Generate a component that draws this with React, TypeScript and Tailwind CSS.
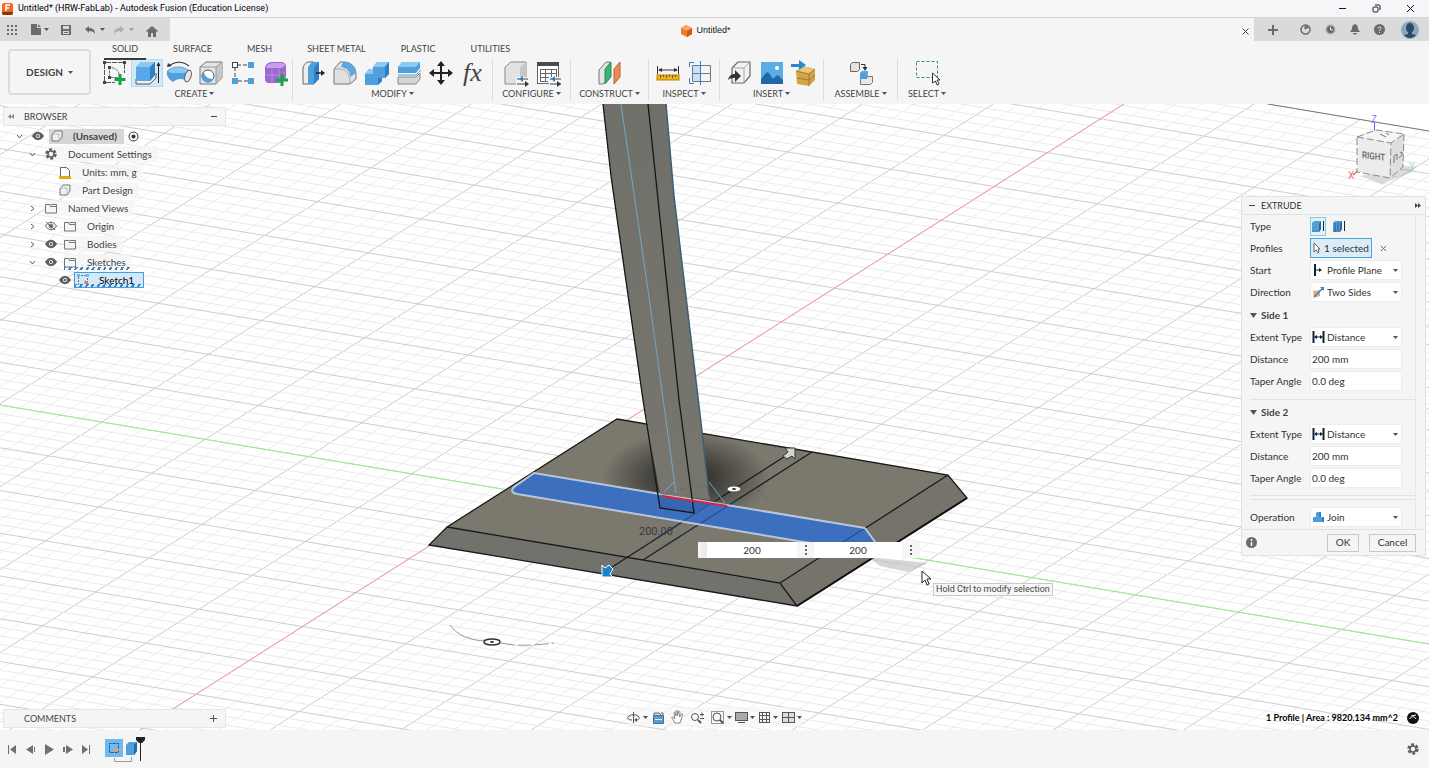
import { useState } from "react";
import type { ReactNode } from "react";

function Caret({ className = "text-gray-600" }: { className?: string }) {
  return (
    <svg width="5" height="3" viewBox="0 0 5 3" className={`shrink-0 ${className}`}>
      <path d="M0 0h5L2.5 3z" fill="currentColor" />
    </svg>
  );
}

function Icon({ size = 28, children }: { size?: number; children: ReactNode }) {
  return (
    <svg width={size} height={size} viewBox="0 0 28 28" fill="none" className="shrink-0">
      {children}
    </svg>
  );
}

/* ---------- toolbar drawings, all on a 28 x 28 grid ---------- */

const createSketch = (
  <Icon>
    <path d="M5 3.500h17M3.500 5v17M23.500 5v9M5 23.500h9" stroke="#555" strokeDasharray="5 1" />
    <path d="M8.500 18.500v-10c6 0 10 3 10 10z" stroke="#666" strokeDasharray="3 1" />
    <path d="M2 2h3v3H2zM22 2h3v3h-3zM2 22h3v3H2zM7 7h3v3H7zM7 17h3v3H7z" fill="#444" />
    <path d="M19 15v11M13.500 20.500h11" stroke="#16a34a" strokeWidth="3" />
  </Icon>
);

const extrude = (
  <Icon>
    <path d="M3 20v5h14l6-6v-5" fill="#f0f0f0" stroke="#555" />
    <path d="M3 8l5-5h14v13l-5 6H3z" fill="#5aa9e6" />
    <path d="M3 8l5-5h14l-5 5z" fill="#8cc8f2" />
    <path d="M17 8l5-5v13l-5 6z" fill="#2f80c4" />
    <path d="M25.500 4v20" stroke="#222" />
    <path d="M23.500 7l2-4 2 4z" fill="#222" />
  </Icon>
);

const revolve = (
  <Icon>
    <path d="M4 7c6-5 14-5 20 0" stroke="#333" strokeWidth="1.200" />
    <path d="M2 8l1-4 4 3z" fill="#333" />
    <path d="M2 12c6-6 17-6 23 0l-2 11c-4-4-11-4-15 0-4-2-7-7-6-11z" fill="#4f9fdd" />
    <path d="M3 12c6-5 15-5 21 0-4 3-8 2-11 2s-7 1-10-2z" fill="#8cc8f2" />
    <ellipse cx="23" cy="17" rx="3" ry="6" fill="#e8e8e8" stroke="#555" transform="rotate(18 23 17)" />
  </Icon>
);

const hole = (
  <Icon>
    <path d="M3 8l6-5h16v16l-6 6H3z" fill="#e4e4e4" stroke="#777" />
    <path d="M19 8l6-5v16l-6 6z" fill="#c6c6c6" />
    <path d="M3 8h16v17M19 8l6-5" stroke="#999" />
    <circle cx="11" cy="17" r="6" fill="#fff" stroke="#555" />
    <path d="M7 12.500a6 6 0 1 0 9 7.500c-5 0-9-3-9-7.500z" fill="#4f9fdd" />
  </Icon>
);

const pattern = (
  <Icon>
    <path d="M8 6h11M6 8v11M9 22h10" stroke="#444" strokeDasharray="4 2" />
    <rect x="3.500" y="3.500" width="5" height="5" fill="#fff" stroke="#444" />
    <rect x="19" y="3" width="6" height="6" fill="#4f9fdd" />
    <rect x="3" y="19" width="6" height="6" fill="#4f9fdd" />
    <rect x="19" y="19" width="6" height="6" fill="#4f9fdd" />
  </Icon>
);

const form = (
  <Icon>
    <path d="M4 9c0-3 3-6 7-6h9c3 0 5 2 5 4v10c0 4-3 7-7 7H8c-3 0-4-2-4-4z" fill="#9d68cf" />
    <path d="M5 8c2-3 4-4 7-4h8c2 0 4 1 4 2-2 3-4 3-7 3H8c-1 0-3 0-3-1z" fill="#c9a0ec" />
    <path d="M11 10v13M5 16h13c3 0 5-1 6-3M18 10v13" stroke="#b98be0" />
    <path d="M21 15v12M15 21h12" stroke="#16a34a" strokeWidth="3" />
  </Icon>
);

const pressPull = (
  <Icon>
    <path d="M4 25V9c1-4 3-6 6-6h5v22z" fill="#ececec" stroke="#666" />
    <path d="M9 25V8l4-5h7v17l-5 5z" fill="#4f9fdd" />
    <path d="M15 8l5-5v17l-5 5z" fill="#2f80c4" />
    <path d="M17 14h7" stroke="#222" strokeWidth="1.500" />
    <path d="M22 11l4 3-4 3z" fill="#222" />
  </Icon>
);

const fillet = (
  <Icon>
    <path d="M3 25V10l6-7h4c7 0 12 5 12 12v5l-6 5z" fill="#e0e0e0" stroke="#777" />
    <path d="M12 3h1c7 0 12 5 12 11l-6 4c0-6-3-9-9-10z" fill="#5aa9e6" />
    <path d="M3 10h5c7 0 11 4 11 15" stroke="#aaa" />
  </Icon>
);

const combine = (
  <Icon>
    <path d="M10 8l4-5h12v12l-4 4h-3v3l-4 4H2V15l4-5h4z" fill="#4f9fdd" />
    <path d="M10 8l4-5h12l-4 5zM2 15l4-5h4v5z" fill="#8cc8f2" />
    <path d="M22 8l4-5v12l-4 4zM15 19h4v3l-4 4z" fill="#2f80c4" />
  </Icon>
);

const offsetFace = (
  <Icon>
    <path d="M3 18h18l4-4v6l-4 5H3z" fill="#d6d6d6" stroke="#888" />
    <path d="M3 8l4-5h18v6l-4 5H3z" fill="#4f9fdd" />
    <path d="M3 8l4-5h18l-4 5z" fill="#8cc8f2" />
    <path d="M3 16h18l5-5" stroke="#4f9fdd" />
  </Icon>
);

const move = (
  <Icon>
    <path d="M14 5v18M5 14h18" stroke="#222" strokeWidth="2" />
    <path d="M14 2l4 5h-8zM14 26l4-5h-8zM2 14l5-4v8zM26 14l-5-4v8z" fill="#222" />
  </Icon>
);

const configureBox = (
  <Icon>
    <path d="M3 25V8l6-5h15v15l-6 7z" fill="#e2e2e2" stroke="#888" />
    <path d="M18 8l6-5v15l-6 7z" fill="#c8c8c8" />
    <path d="M14 18h14v9H14z" fill="#f5f5f5" />
    <path d="M15 20h11M15 25h11" stroke="#444" />
    <path d="M21 17l-4 3 4 3z" fill="#2f80c4" />
    <path d="M23 22l4 3-4 3z" fill="#333" />
  </Icon>
);

const configureTable = (
  <Icon>
    <rect x="3.500" y="4.500" width="21" height="20" fill="#fff" stroke="#666" />
    <rect x="3" y="3" width="22" height="4" fill="#4a4a4a" />
    <path d="M6 10.500h16M6 14.500h16M6 18.500h12M6 22.500h8M6.500 10v13M11.500 10v13M17.500 10v9M22.500 10v8" stroke="#666" />
    <path d="M15 18h13v9H15z" fill="#f5f5f5" />
    <path d="M16 20h11M16 25h11" stroke="#444" />
    <path d="M21 17l-4 3 4 3z" fill="#2f80c4" />
    <path d="M23 22l4 3-4 3z" fill="#333" />
  </Icon>
);

const plane = (
  <Icon>
    <path d="M3 25V11l7-8h4v14l-7 8z" fill="#e5e5e5" stroke="#777" />
    <path d="M9 10l6-7v15l-6 7z" fill="#3bb273" stroke="#2b8a57" />
    <path d="M18 10l6-7v15l-6 7z" fill="#e8895a" stroke="#bd6236" />
  </Icon>
);

const measure = (
  <Icon>
    <path d="M3.500 7v8M24.500 7v8M5 11h18" stroke="#333" />
    <path d="M4 11l4-2v4zM24 11l-4-2v4z" fill="#333" />
    <rect x="3" y="16" width="22" height="5" fill="#f0b323" stroke="#b98300" />
    <path d="M6.500 16v3M9.500 16v2M12.500 16v3M15.500 16v2M18.500 16v3M21.500 16v2" stroke="#7d5800" />
  </Icon>
);

const inspectGrid = (
  <Icon>
    <rect x="6" y="6" width="8" height="17" fill="#c7e3f8" />
    <path d="M6.500 6.500h18v16h-18zM6 14.500h18" stroke="#778" />
    <path d="M8 3.500H3.500V8M3.500 19v5.500H8M14.500 2v24" stroke="#2f80c4" />
  </Icon>
);

const insertDerive = (
  <Icon>
    <path d="M6 9l6-6h12v14l-6 7H6z" fill="#f2f2f2" stroke="#666" strokeWidth="1.200" />
    <path d="M6 9h12v15M18 9l6-6" stroke="#aaa" />
    <path d="M2 21c1-4 3-6 7-6v-4l6 6-6 6v-4c-3 0-5 0-7 2z" fill="#333" />
  </Icon>
);

const picture = (
  <Icon>
    <rect x="3" y="3" width="22" height="22" fill="#5aaee8" />
    <circle cx="19" cy="9" r="2" fill="#fff" />
    <path d="M3 20l5-6c1-1 2-1 3 0l4 6 3-3c1-1 2-1 3 0l4 4v4H3z" fill="#2168a5" />
  </Icon>
);

const crate = (
  <Icon>
    <path d="M6 12l7-5 12 3v11l-6 6-12-2z" fill="#d2a548" />
    <path d="M6 12l7-5 12 3-6 5z" fill="#e8c878" />
    <path d="M6 12l13 3 6-5M19 15v12M7 19l12 2 6-5" stroke="#a37a28" />
    <path d="M1 5h8V1l7 5-7 5V8H1z" fill="#2b87d3" />
  </Icon>
);

const joint = (
  <Icon>
    <path d="M3.500 5.500l2-2h7v7l-2 2h-7z" fill="#e3e3e3" stroke="#666" />
    <path d="M14 5.500h4v3" stroke="#333" />
    <path d="M15.500 8h5L18 12z" fill="#333" />
    <path d="M13 14l2-2h6v9h-8z" fill="#5aa9e6" />
    <path d="M13.500 25.500v-6h6l1-2h5v6l-2 2z" fill="#e8e8e8" stroke="#777" />
    <path d="M13 14h6v6h-6z" fill="#4f9fdd" />
  </Icon>
);

const selectBox = (
  <Icon>
    <rect x="3.500" y="2.500" width="21" height="16" stroke="#2f9e5a" strokeDasharray="3 2" />
    <path d="M19.500 14v10l3-2 1.500 4 2-1-2-4h3z" fill="#fff" stroke="#333" />
  </Icon>
);

const groups = [
  { name: "CREATE", width: "w-[196px]", active: 1, icons: [createSketch, extrude, revolve, hole, pattern, form] },
  { name: "MODIFY", width: "w-[200px]", icons: [pressPull, fillet, combine, offsetFace, move, "fx"] },
  { name: "CONFIGURE", width: "w-[78px]", icons: [configureBox, configureTable] },
  { name: "CONSTRUCT", width: "w-[78px]", icons: [plane] },
  { name: "INSPECT", width: "w-[71px]", icons: [measure, inspectGrid] },
  { name: "INSERT", width: "w-[104px]", icons: [insertDerive, picture, crate] },
  { name: "ASSEMBLE", width: "w-[74px]", icons: [joint] },
  { name: "SELECT", width: "w-[58px]", icons: [selectBox] },
];

const ribbonTabs = ["SOLID", "SURFACE", "MESH", "SHEET METAL", "PLASTIC", "UTILITIES"];

function TitleBar() {
  return (
    <header className="flex h-[18px] items-center justify-between border-b border-[#d4d4d6] bg-[#f6f6f9] pl-[2px] pr-[14px]">
      <div className="flex items-center gap-[5px]">
        <svg width="11" height="12" viewBox="0 0 11 12">
          <rect width="11" height="12" rx="2" fill="#f26a1b" />
          <path d="M0 9h11v1a2 2 0 0 1-2 2H2a2 2 0 0 1-2-2z" fill="#8e3708" />
          <path d="M4 8V2h4M4 5h3" stroke="#fff" strokeWidth="1.500" fill="none" />
        </svg>
        <span className="font-[Roboto,sans-serif] text-[9px] text-black">
          Untitled* (HRW-FabLab) - Autodesk Fusion (Education License)
        </span>
      </div>
      <div className="flex items-center gap-[25px] text-gray-900">
        <button aria-label="Minimize">
          <svg width="9" height="9" viewBox="0 0 9 9"><path d="M1 4.500h7" stroke="currentColor" /></svg>
        </button>
        <button aria-label="Restore">
          <svg width="9" height="9" viewBox="0 0 9 9" fill="none" stroke="currentColor">
            <rect x="1" y="3" width="5" height="5" rx="1" />
            <path d="M3 1h4a1 1 0 0 1 1 1v4" />
          </svg>
        </button>
        <button aria-label="Close">
          <svg width="9" height="9" viewBox="0 0 9 9"><path d="M1 1l7 7M8 1L1 8" stroke="currentColor" /></svg>
        </button>
      </div>
    </header>
  );
}

function TabBar() {
  return (
    <div className="flex h-[23px] bg-[#dadada] text-[#6b6b6b]">
      <div className="flex w-[170px] shrink-0 items-center pl-[7px]">
        <button aria-label="Data panel" className="mr-[14px]">
          <svg width="10" height="10" viewBox="0 0 10 10" fill="currentColor">
            <path d="M0 0h2v2H0zM4 0h2v2H4zM8 0h2v2H8zM0 4h2v2H0zM4 4h2v2H4zM8 4h2v2H8zM0 8h2v2H0zM4 8h2v2H4zM8 8h2v2H8z" />
          </svg>
        </button>
        <button aria-label="File" className="mr-[12px] flex items-center gap-[3px]">
          <svg width="10" height="11" viewBox="0 0 10 11" fill="currentColor"><path d="M0 0h6v4h4v7H0zM7 0l3 3H7z" /></svg>
          <Caret />
        </button>
        <button aria-label="Save" className="mr-[14px]">
          <svg width="10" height="10" viewBox="0 0 10 10">
            <path d="M0 0h10v10H0z" fill="currentColor" />
            <path d="M2 1h6v3H2zM2 6h6v3H2z" fill="#dadada" />
            <path d="M3 7.500h4" stroke="#6b6b6b" />
          </svg>
        </button>
        <button aria-label="Undo" className="mr-[9px] flex items-center gap-[5px]">
          <svg width="10" height="8" viewBox="0 0 10 8"><path d="M0 3l4-3v2c4 0 6 2 6 6-1-2-3-3-6-3v2z" fill="currentColor" /></svg>
          <Caret />
        </button>
        <button aria-label="Redo" className="mr-[12px] flex items-center gap-[5px] text-[#adadad]">
          <svg width="10" height="8" viewBox="0 0 10 8"><path d="M10 3L6 0v2C2 2 0 4 0 8c1-2 3-3 6-3v2z" fill="currentColor" /></svg>
          <Caret className="text-[#999]" />
        </button>
        <button aria-label="Home" className="pt-1">
          <svg width="12" height="11" viewBox="0 0 12 11" fill="currentColor"><path d="M6 0l6 5-1 1-1-1v6H7V7H5v4H2V5L1 6 0 5z" /></svg>
        </button>
      </div>
      <div className="flex flex-1 items-center bg-[#f5f5f5] pt-[3px]">
        <div className="flex flex-1 items-center justify-center gap-1">
          <svg width="11" height="12" viewBox="0 0 11 12">
            <path d="M5 0l6 3v6l-5 3-6-3V3z" fill="#f07a2a" />
            <path d="M5 0l6 3-5 3-6-3z" fill="#f9a76a" />
            <path d="M6 6l5-3v6l-5 3z" fill="#d9570c" />
          </svg>
          <span className="font-['Liberation_Sans',sans-serif] text-[9px] text-gray-900">Untitled*</span>
        </div>
        <button aria-label="Close tab" className="mr-[5px] text-gray-700">
          <svg width="7" height="7" viewBox="0 0 7 7"><path d="M0.500 0.500l6 6M6.500 0.500l-6 6" stroke="currentColor" /></svg>
        </button>
      </div>
      <div className="flex w-[175px] shrink-0 items-center pl-[14px]">
        <button aria-label="New tab" className="mr-[22px]">
          <svg width="10" height="10" viewBox="0 0 10 10"><path d="M5 0v10M0 5h10" stroke="currentColor" strokeWidth="2" /></svg>
        </button>
        <button aria-label="Extensions" className="mr-[14px]">
          <svg width="11" height="11" viewBox="0 0 11 11" fill="none" stroke="currentColor">
            <circle cx="5.500" cy="5.500" r="4.500" strokeWidth="1.500" />
            <path d="M5.500 2v2l3-1" strokeWidth="2" />
          </svg>
        </button>
        <button aria-label="Job status" className="mr-[14px]">
          <svg width="11" height="11" viewBox="0 0 11 11" fill="none">
            <circle cx="5.500" cy="5.500" r="5" fill="#a8a8a8" />
            <circle cx="5.500" cy="5.500" r="3.500" fill="#666" />
            <path d="M5.500 3v3H8" stroke="#eee" />
          </svg>
        </button>
        <button aria-label="Notifications" className="mr-[14px]">
          <svg width="10" height="11" viewBox="0 0 10 11" fill="currentColor"><path d="M5 0c3 1 3 3 3 5l2 3H0l2-3c0-2 0-4 3-5zM3 9h4c0 2-4 2-4 0z" /></svg>
        </button>
        <button aria-label="Help" className="mr-[16px]">
          <svg width="11" height="11" viewBox="0 0 11 11" fill="none">
            <circle cx="5.500" cy="5.500" r="5.500" fill="currentColor" />
            <path d="M4 4.500c0-2 3-2 3 0 0 1-1.500 1-1.500 2.500M5.500 8v1" stroke="#eee" />
          </svg>
        </button>
        <button aria-label="Account">
          <svg width="18" height="18" viewBox="0 0 18 18">
            <circle cx="9" cy="9" r="9" fill="#8ba6bf" />
            <ellipse cx="9" cy="7" rx="4" ry="5" fill="#2f4a63" />
            <path d="M7 10h4v3l4 1c-3 4-9 4-12 0l4-1z" fill="#2f4a63" />
          </svg>
        </button>
      </div>
    </div>
  );
}

function Ribbon() {
  const [tab, setTab] = useState("SOLID");

  return (
    <div className="flex h-[63px] bg-[#f5f5f5] text-[#444]">
      <button className="ml-[8px] mt-[8px] flex h-[46px] w-[83px] shrink-0 items-center justify-center gap-[5px] rounded-sm border-2 border-[#dcdcdc] text-[10px] font-bold">
        DESIGN <Caret />
      </button>
      <div className="ml-[6px] flex flex-1 flex-col">
        <nav className="flex h-[18px] gap-[35px] pl-[15px]">
          {ribbonTabs.map((name) => (
            <button
              key={name}
              onClick={() => setTab(name)}
              className="relative flex h-[16px] items-center text-[9px]"
            >
              {name}
              {tab === name && <span className="absolute -left-2 -right-2 top-[17px] h-[2px] bg-[#3c3c3c]" />}
            </button>
          ))}
        </nav>
        <div className="flex">
          {groups.map((group) => (
            <section
              key={group.name}
              className={`${group.width} flex h-[41px] shrink-0 flex-col items-center border-r border-[#dcdcdc] last:border-r-0`}
            >
              <div className="flex h-[28px]">
                {group.icons.map((icon, i) => (
                  <button
                    key={i}
                    className={`flex h-[28px] w-[32px] items-center justify-center ${
                      group.active === i ? "bg-[#d3e9f8] outline outline-[#b3d9f2] -outline-offset-1" : ""
                    }`}
                  >
                    {icon === "fx" ? (
                      <span className="font-['Liberation_Serif',serif] text-[26px] italic leading-none">fx</span>
                    ) : (
                      icon
                    )}
                  </button>
                ))}
              </div>
              <button className="flex h-[13px] items-center gap-[2px] text-[9px]">
                {group.name} <Caret />
              </button>
            </section>
          ))}
        </div>
      </div>
    </div>
  );
}

/* ---------- canvas ---------- */

// the ground grid is almost parallel-projected, so both line families keep one slope
const CELL_X = 26.1;
const CELL_Y = 8.55;

function range(from: number, to: number) {
  return Array.from({ length: to - from + 1 }, (_, i) => from + i);
}

function Scene() {
  return (
    <svg
      className="absolute inset-0 h-full w-full"
      viewBox="0 104 1429 626"
      preserveAspectRatio="xMidYMid slice"
      fill="none"
    >
      <defs>
        <clipPath id="ground">
          <path d="M0 104H1268L1429 131V730H0z" />
        </clipPath>
        <radialGradient id="contact" cx="686" cy="478" r="84" gradientUnits="userSpaceOnUse" gradientTransform="matrix(1 0 0 .55 0 215)">
          <stop offset="0" stopColor="#1c1c1a" stopOpacity="0.950" />
          <stop offset="0.500" stopColor="#1c1c1a" stopOpacity="0.500" />
          <stop offset="1" stopColor="#1c1c1a" stopOpacity="0" />
        </radialGradient>
        <linearGradient id="pole" x1="0" y1="0" x2="0" y2="1">
          <stop offset="0" stopColor="#70706a" />
          <stop offset="1" stopColor="#77766e" />
        </linearGradient>
      </defs>

      <g clipPath="url(#ground)">
        {range(-50, 65).map((k) => {
          const x = 1123.7 + k * CELL_X;
          return (
            <path key={k} d={`M${x} 104L${x - 984} 730`} stroke={k % 5 === 0 ? "#cdcdcd" : "#eeeeee"} />
          );
        })}
        {range(-60, 42).map((k) => {
          const y = 405 + k * CELL_Y;
          return (
            <path key={k} d={`M0 ${y}L1429 ${y + 239}`} stroke={k % 5 === 0 ? "#cdcdcd" : "#eaeaea"} />
          );
        })}
      </g>
      <path d="M1268 104L1429 131" stroke="#777" />
      <path d="M1124 104L140 730" stroke="#f79a9a" />
      <path d="M0 405L1429 644" stroke="#93f093" />

      {/* base plate */}
      <path d="M617 419L948 475L967 498L797 606L429 545L447 527z" fill="#7b786d" />
      <path d="M447 527L780 583L797 606L429 545z" fill="#72726c" />
      <path d="M948 475L967 498L797 606L780 583z" fill="#77736a" />
      <path d="M617 419L948 475L780 583L447 527z" fill="url(#contact)" />
      <path
        d="M617 419L948 475L967 498L797 606L429 545L447 527zM447 527L780 583L797 606M780 583L948 475"
        stroke="#1a1a1a"
        strokeWidth="1.300"
      />
      <path d="M967 498L797 606" stroke="#111" strokeWidth="2" />
      <path d="M787 455L609 569M812 452L643 560" stroke="#1a1a1a" strokeWidth="1.200" />

      {/* selected profile */}
      <path d="M534 473L865 528L878 546H828L517 494Q509 492 514 487z" fill="#3c6fbd" />
      <path d="M865 528L835 547M718 499L655 539M739 499L682 535" stroke="#1f3f7c" />
      <path d="M865 528L878 546M828 546L517 494Q509 492 514 487L534 473L865 528" stroke="#b9c6da" strokeWidth="2" />

      {/* pole */}
      <path d="M603 104H666L674 196L702 431L710 500L660 494L643 400L611 176z" fill="url(#pole)" />
      <path d="M658 496L710 503L695 514L660 508z" fill="#3566b2" />
      <path d="M603 104L611 176L643 400L660 508L694 513L679 400L648 104" stroke="#161616" strokeWidth="1.300" />
      <path d="M666 104L674 196L702 431L709 496" stroke="#3c5f78" strokeWidth="1.500" />
      <path d="M621 104L650 304L676 493M675 481L664 492M709 482L725 503" stroke="#6fa9c4" />
      <path d="M662 496L727 506" stroke="#e0203c" strokeWidth="2" />

      {/* drag handles */}
      <path d="M750 487C760 491 768 496 768 503M680 489C695 485 710 486 726 488" stroke="#555" strokeDasharray="6 2" opacity="0.400" />
      <ellipse cx="734" cy="489" rx="7" ry="3" fill="#fff" stroke="#555" />
      <ellipse cx="734" cy="489" rx="2" ry="1" fill="#333" />
      <path d="M450 625C458 636 470 640 484 641" stroke="#999" />
      <path d="M501 643C515 646 530 646 554 643" stroke="#999" strokeDasharray="14 3" />
      <ellipse cx="492" cy="642" rx="8" ry="3" fill="#fff" stroke="#333" strokeWidth="1.500" />
      <ellipse cx="492" cy="642" rx="2" ry="1" fill="#333" />
      <path d="M785 448h10v11l-3-3-5 3-4-3 5-4z" fill="#d4d4d0" stroke="#333" />
      <path d="M602 565v12h11l-3-3 3-5-4-4-4 3z" fill="#1d82cc" stroke="#fff" />
      <path d="M868 557L928 563L908 572L880 566z" fill="#999" opacity="0.400" />
      <text x="639" y="535" fill="#3a3a38" fontSize="11" className="font-[Roboto,sans-serif]">200.00</text>
      <path d="M922 571v12l3-3 2 5 2-1-2-5h4z" fill="#fff" stroke="#222" />
    </svg>
  );
}

function Eye({ off = false }: { off?: boolean }) {
  return (
    <svg width="12" height="10" viewBox="0 0 12 10" fill="none" className="shrink-0">
      <path d="M0.500 5c3-5 8-5 11 0-3 5-8 5-11 0z" fill={off ? "none" : "#5f5f5f"} stroke="#5f5f5f" />
      <circle cx="6" cy="5" r="2" fill={off ? "none" : "#f5f5f5"} stroke={off ? "#5f5f5f" : "none"} />
      <circle cx="6" cy="5" r="1" fill="#333" />
      {off && <path d="M1 1l9 8" stroke="#5f5f5f" />}
    </svg>
  );
}

function Folder() {
  return (
    <svg width="12" height="11" viewBox="0 0 12 11" fill="none" className="shrink-0">
      <path d="M0.500 10V1.500h4l1 2h6V10zM5.500 1.500h6v2" stroke="#757575" />
    </svg>
  );
}

function PartBox() {
  return (
    <svg width="12" height="12" viewBox="0 0 12 12" className="shrink-0">
      <path d="M1 11V5l3-4h7v6l-3 4z" fill="#f0f0f0" stroke="#777" />
      <path d="M2 4h6v6" stroke="#bbb" fill="none" />
    </svg>
  );
}

function Gear() {
  return (
    <svg width="12" height="12" viewBox="0 0 12 12" fill="none" className="shrink-0">
      <circle cx="6" cy="6" r="4.500" stroke="#5f5f5f" strokeWidth="2.500" strokeDasharray="2.900 1.800" />
      <circle cx="6" cy="6" r="3" stroke="#5f5f5f" strokeWidth="1.500" />
    </svg>
  );
}

function Ruler() {
  return (
    <svg width="12" height="13" viewBox="0 0 12 13" className="shrink-0">
      <path d="M1.500 10V1.500h6l3 3V10" fill="#fff" stroke="#666" />
      <path d="M0 10h12v3H0z" fill="#e0a81c" />
    </svg>
  );
}

function SketchIcon() {
  return (
    <svg width="13" height="12" viewBox="0 0 13 12" fill="none" className="shrink-0">
      <path d="M1.500 11V1.500h9V11" stroke="#4a7ba0" strokeDasharray="2 1" />
      <path d="M0 0h3v3H0zM9 0h3v3H9z" fill="#8fb4cf" />
      <path d="M8 6l4 4H7z" fill="#e07b52" />
    </svg>
  );
}

function Chevron({ open }: { open: boolean }) {
  return (
    <svg width="7" height="7" viewBox="0 0 7 7" fill="none" className="shrink-0">
      <path d={open ? "M1 2l2.500 3L6 2" : "M2 1l3 2.500L2 6"} stroke="#555" />
    </svg>
  );
}

function Dashes() {
  return <span className="absolute inset-x-0 bottom-0 h-[3px] bg-[repeating-linear-gradient(120deg,#2f80c4_0_2px,transparent_2px_5px)]" />;
}

type TreeRow = {
  label: string;
  pad: string;
  gap: string;
  open?: boolean;
  eye?: "on" | "off";
  icon: ReactNode;
  dashed?: boolean;
};

const tree: TreeRow[] = [
  { label: "Document Settings", pad: "pl-[29px]", gap: "gap-[11px]", open: true, icon: <Gear /> },
  { label: "Units: mm, g", pad: "pl-[59px]", gap: "gap-[11px]", icon: <Ruler /> },
  { label: "Part Design", pad: "pl-[59px]", gap: "gap-[11px]", icon: <PartBox /> },
  { label: "Named Views", pad: "pl-[29px]", gap: "gap-[11px]", open: false, icon: <Folder /> },
  { label: "Origin", pad: "pl-[29px]", gap: "gap-[11px]", open: false, eye: "off", icon: <Folder /> },
  { label: "Bodies", pad: "pl-[29px]", gap: "gap-[11px]", open: false, eye: "on", icon: <Folder /> },
  { label: "Sketches", pad: "pl-[29px]", gap: "gap-[11px]", open: true, eye: "on", icon: <Folder />, dashed: true },
];

function Browser() {
  return (
    <div className="text-[10px] text-[#444]">
      <div className="ml-[3px] flex h-[19px] w-[223px] items-center border border-[#e6e6e6] bg-[#f5f5f5] pl-[4px] pr-[8px]">
        <button aria-label="Collapse browser" className="mr-[10px]">
          <svg width="6" height="5" viewBox="0 0 6 5" fill="#888"><path d="M3 0v5L0 2.500zM6 0v5L3 2.500z" /></svg>
        </button>
        <span className="flex-1 text-[9px]">BROWSER</span>
        <button aria-label="Minimize browser" className="h-px w-[6px] bg-[#444]" />
      </div>
      <div className="mt-[1px] flex h-[18px] items-center pl-[16px]">
        <Chevron open />
        <span className="ml-[9px] flex"><Eye /></span>
        <span className="ml-[5px] flex h-[15px] items-center gap-[10px] bg-[#d6d6d6] pl-[2px] pr-[7px] font-bold">
          <PartBox /> (Unsaved)
        </span>
        <svg width="11" height="11" viewBox="0 0 11 11" fill="none" className="ml-[4px]">
          <circle cx="5.500" cy="5.500" r="4.500" stroke="#333" />
          <circle cx="5.500" cy="5.500" r="2" fill="#333" />
        </svg>
      </div>
      {tree.map((row) => (
        <div key={row.label} className={`flex h-[18px] items-center ${row.pad}`}>
          {row.open !== undefined && <span className="mr-[9px] flex"><Chevron open={row.open} /></span>}
          {row.eye && <span className="mr-[7px] flex"><Eye off={row.eye === "off"} /></span>}
          <span className={`relative flex h-[16px] items-center bg-[#f5f5f5]/80 pr-[6px] ${row.gap}`}>
            {row.icon} {row.label}
            {row.dashed && <Dashes />}
          </span>
        </div>
      ))}
      <div className="flex h-[18px] items-center pl-[59px]">
        <Eye />
        <span className="relative ml-[3px] flex h-[16px] items-center gap-[9px] border border-[#3fa0dc] bg-[#d3e9f8] pl-[2px] pr-[9px] text-black">
          <SketchIcon /> Sketch1
          <Dashes />
        </span>
      </div>
    </div>
  );
}

/* ---------- extrude dialog ---------- */

function MiniBox({ dark = false }: { dark?: boolean }) {
  return (
    <svg width="14" height="14" viewBox="0 0 14 14">
      <path d="M1 4l2-2h7v8l-2 3H1z" fill="#4f9fdd" />
      <path d="M8 5l2-3v8l-2 3z" fill="#2168a5" />
      <path d="M1 12h7" stroke="#777" />
      {dark && <path d="M3 4v9M6 3v9" stroke="#1d5f99" />}
      <path d="M12.500 2v10" stroke="#222" />
    </svg>
  );
}

const startIcon = (
  <svg width="13" height="12" viewBox="0 0 13 12" className="shrink-0">
    <path d="M3 0v12" stroke="#0e2238" strokeWidth="2" />
    <path d="M4 6h5" stroke="#0e2238" />
    <path d="M7 4l3 2-3 2z" fill="#0e2238" />
  </svg>
);
const distanceIcon = (
  <svg width="13" height="12" viewBox="0 0 13 12" className="shrink-0">
    <path d="M1.500 0v12M11.500 0v12" stroke="#0e2238" strokeWidth="2" />
    <path d="M3 6h7" stroke="#0e2238" />
    <path d="M2 6l3-2v4zM11 6L8 4v4z" fill="#0e2238" />
  </svg>
);
const twoSidesIcon = (
  <svg width="13" height="12" viewBox="0 0 13 12" className="shrink-0">
    <path d="M1 5l7-1v6l-6 2z" fill="#f0a67c" />
    <path d="M2 11l9-9" stroke="#2b87d3" strokeWidth="1.500" />
    <path d="M8 1h4v4z" fill="#2b87d3" />
  </svg>
);
const joinIcon = (
  <svg width="13" height="12" viewBox="0 0 13 12" className="shrink-0">
    <path d="M4 6V2l1-1h4v5h3v5H1V6z" fill="#4f9fdd" />
    <path d="M7 2l2-1v5H7zM10 7l2-1v5h-2z" fill="#2f80c4" />
  </svg>
);

function Row({ label, id, children }: { label: string; id?: string; children: ReactNode }) {
  return (
    <div className="flex h-[22px] items-center">
      <label htmlFor={id} className="w-[60px] shrink-0">{label}</label>
      {children}
    </div>
  );
}

function Pick({ id, icon, options }: { id: string; icon: ReactNode; options: string[] }) {
  return (
    <div className="flex h-[20px] w-[92px] items-center gap-[2px] border border-[#ececec] bg-white pl-[1px] pr-[3px]">
      {icon}
      <select id={id} className="min-w-0 flex-1 appearance-none bg-transparent outline-none">
        {options.map((o) => (
          <option key={o}>{o}</option>
        ))}
      </select>
      <Caret />
    </div>
  );
}

function Side({ n }: { n: number }) {
  const [distance, setDistance] = useState("200 mm");
  const [taper, setTaper] = useState("0.0 deg");
  const field = "h-[20px] w-[92px] border border-[#ececec] bg-white pl-[1px] outline-none";

  return (
    <>
      <button className="mt-[1px] flex h-[22px] items-center gap-[4px] font-bold text-[#444]">
        <svg width="7" height="5" viewBox="0 0 7 5"><path d="M0 0h7L3.500 5z" fill="#555" /></svg>
        Side {n}
      </button>
      <Row label="Extent Type" id={`extent-${n}`}>
        <Pick id={`extent-${n}`} icon={distanceIcon} options={["Distance", "To Object", "All"]} />
      </Row>
      <Row label="Distance" id={`distance-${n}`}>
        <input id={`distance-${n}`} value={distance} onChange={(e) => setDistance(e.target.value)} className={field} />
      </Row>
      <Row label="Taper Angle" id={`taper-${n}`}>
        <input id={`taper-${n}`} value={taper} onChange={(e) => setTaper(e.target.value)} className={field} />
      </Row>
    </>
  );
}

function ExtrudePanel() {
  return (
    <section className="mr-[3px] w-[185px] border border-[#e2e2e2] bg-[#f5f5f5] text-[10px] text-[#333]">
      <div className="flex h-[18px] items-center border-b border-[#e2e2e2] pl-[7px] pr-[4px]">
        <button aria-label="Minimize dialog" className="mr-[6px] h-px w-[6px] bg-[#444]" />
        <h2 className="flex-1 text-[9px]">EXTRUDE</h2>
        <button aria-label="Expand dialog">
          <svg width="6" height="5" viewBox="0 0 6 5" fill="#444"><path d="M0 0v5l3-2.500zM3 0v5l3-2.500z" /></svg>
        </button>
      </div>
      <div className="mr-[9px] border-r border-[#e8e8e8] pl-[8px]">
        <Row label="Type">
          <button aria-label="Extrude" className="flex h-[19px] w-[16px] items-center justify-center border border-[#8cc8ea] bg-[#e3f1fa]">
            <MiniBox />
          </button>
          <button aria-label="Thin extrude" className="ml-[6px]">
            <MiniBox dark />
          </button>
        </Row>
        <Row label="Profiles">
          <button className="flex h-[20px] w-[62px] items-center justify-center gap-[3px] border border-[#4ba3d9] bg-[#d9ecf8]">
            <svg width="8" height="12" viewBox="0 0 8 12"><path d="M1 1v9l2-2 2 3 1-1-1-3h2z" fill="#fff" stroke="#666" /></svg>
            1 selected
          </button>
          <button aria-label="Clear selection" className="ml-[9px]">
            <svg width="5" height="5" viewBox="0 0 5 5"><path d="M0 0l5 5M5 0L0 5" stroke="#666" /></svg>
          </button>
        </Row>
        <Row label="Start" id="start">
          <Pick id="start" icon={startIcon} options={["Profile Plane", "Offset Plane", "Object"]} />
        </Row>
        <Row label="Direction" id="direction">
          <Pick id="direction" icon={twoSidesIcon} options={["Two Sides", "One Side", "Symmetric"]} />
        </Row>
        <Side n={1} />
        <div className="mt-[7px] border-t border-[#e2e2e2]" />
        <Side n={2} />
        <div className="my-[6px] h-[5px] border-y border-[#e2e2e2]" />
        <Row label="Operation" id="operation">
          <Pick id="operation" icon={joinIcon} options={["Join", "Cut", "Intersect", "New Body"]} />
        </Row>
      </div>
      <div className="mt-[1px] flex h-[26px] items-center border-t border-[#e2e2e2] pl-[4px] pr-[9px]">
        <button aria-label="Info" className="mr-auto">
          <svg width="11" height="11" viewBox="0 0 11 11">
            <circle cx="5.500" cy="5.500" r="5.500" fill="#6a6a6a" />
            <path d="M5.500 2v2M5.500 5v4" stroke="#fff" strokeWidth="1.500" />
          </svg>
        </button>
        <button className="mr-[10px] h-[18px] w-[32px] border border-[#c9c9c9]">OK</button>
        <button className="h-[18px] w-[47px] border border-[#c9c9c9]">Cancel</button>
      </div>
    </section>
  );
}

function ViewCube() {
  return (
    <svg width="84" height="92" viewBox="1345 104 84 92" fill="none" className="shrink-0 font-[Roboto,sans-serif]">
      <path d="M1360 176l22 8 30-12 4-6z" fill="#888" opacity="0.300" />
      <path d="M1374.500 123v12" stroke="#6a5cff" />
      <text x="1371" y="123" fontSize="10" fill="#8a7dff">Z</text>
      <path d="M1402 167h8" stroke="#9be0a8" />
      <text x="1409" y="170" fontSize="10" fill="#a6e8b4">Y</text>
      <path d="M1358 171l-5 4" stroke="#e06060" strokeWidth="1.500" />
      <text x="1348" y="179" fontSize="10" fill="#ee7777">X</text>
      <path d="M1357 137l19-7 28 4-13 9z" fill="#f4f4f4" />
      <path d="M1357 137l34 6-1 35-33-6z" fill="#ececec" />
      <path d="M1391 143l13-9-1 33-13 11z" fill="#dedede" />
      <path
        d="M1357 137l34 6-1 35-33-6zM1357 137l19-7 28 4-13 9M1404 134l-1 33-13 11"
        stroke="#8a8a8a"
        strokeDasharray="7 3"
      />
      <text fontSize="8" fontWeight="500" fill="#666" transform="matrix(1 .12 0 1.200 1362 158)">RIGHT</text>
      <path d="M1394 163v-7l3-2v6M1399 158l3-3v-3l-2 1M1380 134l6 3M1386 133l3 2" stroke="#777" />
    </svg>
  );
}

function NavBar() {
  const s = "#555";
  return (
    <div className="mb-[3px] flex h-[20px] items-center self-end bg-[#f5f5f5]/60">
      <button aria-label="Orbit" className="mr-[4px] flex items-center gap-[3px]">
        <svg width="13" height="13" viewBox="0 0 13 13" fill="none" stroke={s}>
          <path d="M5 9C1 9 0 7 1 6c2-3 9-3 11 0 1 1 0 3-3 3" />
          <path d="M6.500 1v11" />
          <path d="M10 7v4L7 9z" fill={s} stroke="none" />
        </svg>
        <Caret />
      </button>
      <button aria-label="Look at" className="mr-[6px]">
        <svg width="13" height="13" viewBox="0 0 13 13" fill="none">
          <path d="M1.500 4.500h10v8h-10z" fill="#4f9fdd" stroke="#666" />
          <path d="M2 4V2h5l2 2M9 2h2v2" fill="#ddd" stroke="#666" />
          <path d="M3 8.500h7" stroke="#d6ecfb" />
        </svg>
      </button>
      <button aria-label="Pan" className="mr-[6px]">
        <svg width="13" height="14" viewBox="0 0 13 14" fill="#fff" stroke="#888">
          <path d="M4 13L1 8c-1-1 1-2 2 0l1 1-1-6c0-1 1-1 1.500 0L5 6l0-5c0-1 1.500-1 1.500 0v5l1-4c0-1 1.500-1 1.500 0L8.500 7l2-3c0-1 1.500 0 1 1L10 10l-1 3z" />
        </svg>
      </button>
      <button aria-label="Zoom" className="mr-[7px]">
        <svg width="14" height="13" viewBox="0 0 14 13" fill="none" stroke={s}>
          <circle cx="5" cy="6" r="3.500" />
          <path d="M8 9l3 3" strokeWidth="2" />
          <path d="M10 3.500h4M12 1.500v4M10 7.500h4" />
        </svg>
      </button>
      <button aria-label="Fit" className="mr-[3px] flex items-center gap-[3px]">
        <svg width="13" height="13" viewBox="0 0 13 13" fill="none" stroke={s}>
          <rect x="0.500" y="0.500" width="12" height="12" stroke="#999" />
          <circle cx="6" cy="6" r="4" />
          <path d="M9 9l3 3" strokeWidth="2" />
        </svg>
        <Caret />
      </button>
      <button aria-label="Display settings" className="mr-[4px] flex items-center gap-[2px]">
        <svg width="13" height="11" viewBox="0 0 13 11" fill="none" stroke={s}>
          <rect x="0.500" y="0.500" width="12" height="8" fill="#aaa" />
          <path d="M3 10.500h7" />
        </svg>
        <Caret />
      </button>
      <button aria-label="Grid and snaps" className="mr-[4px] flex items-center gap-[3px]">
        <svg width="11" height="11" viewBox="0 0 11 11" fill="none" stroke={s}>
          <path d="M0.500 0v11M3.500 0v11M7.500 0v11M10.500 0v11M0 0.500h11M0 3.500h11M0 7.500h11M0 10.500h11" />
        </svg>
        <Caret />
      </button>
      <button aria-label="Viewports" className="flex items-center gap-[2px]">
        <svg width="13" height="11" viewBox="0 0 13 11" fill="#ddd" stroke={s}>
          <rect x="0.500" y="0.500" width="12" height="10" />
          <path d="M6.500 0v11M0 5.500h13" />
        </svg>
        <Caret />
      </button>
    </div>
  );
}

function Dots() {
  return (
    <svg width="2" height="11" viewBox="0 0 2 11" fill="#666">
      <path d="M0 0h2v2H0zM0 4h2v2H0zM0 8h2v2H0z" />
    </svg>
  );
}

function FloatingInputs() {
  const [a, setA] = useState("200");
  const [b, setB] = useState("200");

  return (
    <div className="absolute left-[698px] top-[438px] flex h-[16px] items-center bg-[#f5f5f5] text-[10px] text-[#333]">
      <span className="ml-[3px] h-full w-[6px] bg-[#ececec]" />
      <input aria-label="Side 1 distance" value={a} onChange={(e) => setA(e.target.value)} className="h-full w-[90px] bg-white text-center outline-none" />
      <span className="flex w-[17px] justify-center"><Dots /></span>
      <input aria-label="Side 2 distance" value={b} onChange={(e) => setB(e.target.value)} className="h-full w-[88px] bg-white text-center outline-none" />
      <span className="flex w-[18px] justify-center"><Dots /></span>
    </div>
  );
}

function Timeline() {
  return (
    <footer className="flex h-[38px] items-center bg-[#f5f5f5] pl-[8px] pr-[10px] text-[#707070]">
      <div className="flex items-center gap-[9px]">
        <button aria-label="Go to start">
          <svg width="9" height="9" viewBox="0 0 9 9" fill="currentColor"><path d="M0 0h1v9H0zM8 0v9L2 4.500z" /></svg>
        </button>
        <button aria-label="Step back">
          <svg width="10" height="9" viewBox="0 0 10 9" fill="currentColor"><path d="M7 0v9L0 4.500zM8 2h1v5H8z" /></svg>
        </button>
        <button aria-label="Play">
          <svg width="9" height="11" viewBox="0 0 9 11" fill="currentColor"><path d="M0 0l9 5.500L0 11z" /></svg>
        </button>
        <button aria-label="Step forward">
          <svg width="10" height="9" viewBox="0 0 10 9" fill="currentColor"><path d="M3 0v9l7-4.500zM0 2h2v5H0z" /></svg>
        </button>
        <button aria-label="Go to end">
          <svg width="9" height="9" viewBox="0 0 9 9" fill="currentColor"><path d="M0 0v9l6-4.500zM7 0h1v9H7z" /></svg>
        </button>
      </div>
      <svg width="42" height="28" viewBox="0 0 42 28" fill="none" className="ml-[14px]">
        <rect x="0" y="4" width="18" height="18" fill="#6fbaf0" />
        <path d="M4.500 17.500v-9h9v9z" stroke="#1f5a8c" strokeDasharray="3 1" />
        <path d="M10 12l6 4h-8z" fill="#e0a070" />
        <path d="M21 10l3-3h8v9l-3 4h-8z" fill="#4f9fdd" />
        <path d="M29 10l3-3v9l-3 4z" fill="#2168a5" />
        <path d="M9.500 23v3.500h17V22" stroke="#999" />
        <path d="M35.500 4v22" stroke="#222" />
        <path d="M31 2h9v3l-3 3h-3l-3-3z" fill="#222" />
      </svg>
      <button aria-label="Timeline settings" className="ml-auto"><Gear /></button>
    </footer>
  );
}

export default function App() {
  return (
    <div className="flex h-screen flex-col overflow-hidden bg-white font-[Lato,'Noto_Sans',sans-serif]">
      <TitleBar />
      <TabBar />
      <Ribbon />
      <main className="relative min-h-0 flex-1 overflow-hidden bg-white">
        <Scene />
        <FloatingInputs />
        <div className="absolute left-[933px] top-[479px] border border-[#c9c9c9] bg-[#f7f7f7] px-[2px] font-[Roboto,sans-serif] text-[9px] leading-[11px] text-[#444]">
          Hold Ctrl to modify selection
        </div>
        <div className="relative grid h-full grid-cols-[1fr_auto_1fr]">
          <div className="flex flex-col justify-between pt-[3px] pb-[2px]">
            <Browser />
            <div className="ml-[3px] flex h-[19px] w-[223px] items-center justify-between border border-[#e6e6e6] bg-[#f5f5f5] pl-[20px] pr-[8px] text-[9px] text-[#444]">
              COMMENTS
              <button aria-label="Add comment">
                <svg width="7" height="7" viewBox="0 0 7 7"><path d="M3.500 0v7M0 3.500h7" stroke="#555" /></svg>
              </button>
            </div>
          </div>
          <NavBar />
          <div className="flex flex-col items-end">
            <ViewCube />
            <ExtrudePanel />
            <div className="mt-auto flex h-[24px] items-center gap-[9px] pr-[10px] text-[9px] font-bold text-black">
              1 Profile | Area : 9820.134 mm^2
              <svg width="12" height="12" viewBox="0 0 12 12" fill="none">
                <circle cx="6" cy="6" r="6" fill="#111" />
                <path d="M3 7c0-3 5-3 6 0M4 4l5-1" stroke="#fff" />
              </svg>
            </div>
          </div>
        </div>
      </main>
      <Timeline />
    </div>
  );
}
